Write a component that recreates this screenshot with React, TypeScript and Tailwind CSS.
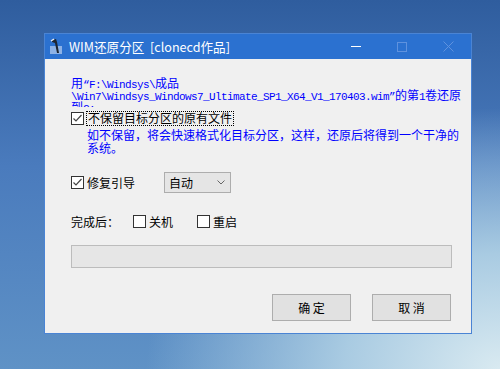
import React from 'react';

const cjk = "font-['Noto_Sans_CJK_SC',sans-serif]";

// SimSun-like run: ASCII half-width (6px), CJK full-width (12px)
function Mixed({ text }: { text: string }) {
  const runs = text.match(/[\x20-\x7e\u201c\u201d]+|[^\x20-\x7e\u201c\u201d]+/g) ?? [];
  return (
    <>
      {runs.map((r, i) =>
        /^[\x20-\x7e\u201c\u201d]/.test(r) ? (
          <span key={i} className="font-['Liberation_Mono',monospace] text-[11px] tracking-[-0.6px]">
            {r}
          </span>
        ) : (
          <span key={i} className={`${cjk} text-[12px]`}>
            {r}
          </span>
        )
      )}
    </>
  );
}

function Check({ checked }: { checked?: boolean }) {
  return (
    <div className="w-[13px] h-[13px] border border-[#333333] bg-white flex items-center justify-center shrink-0">
      {checked && (
        <svg width="11" height="11" viewBox="0 0 11 11">
          <polyline points="1.5,5.5 4,8 9.5,2" fill="none" stroke="#444" strokeWidth="1.2" />
        </svg>
      )}
    </div>
  );
}

function AppIcon() {
  return (
    <svg width="14" height="17" viewBox="0 0 14 17">
      <rect x="1" y="8" width="12" height="8" fill="#8db2e6" />
      <path d="M3 2 L7 1 L8 4 L10 15 L8 15 L6 5 L3 4 Z" fill="#1d2530" />
      <path d="M2 3 L5 1" stroke="#e8eef8" strokeWidth="1.5" />
    </svg>
  );
}

export default function App() {
  return (
    <div className="w-[500px] h-[369px] overflow-hidden pl-[44px] pt-[33px] bg-[radial-gradient(ellipse_at_100%_100%,#d9eaf1_0%,#a9cbe2_22%,transparent_50%),linear-gradient(180deg,#2f5d9e_0%,#4a7bbd_45%,#5f92c6_100%)]">
      <div className="w-[428px] h-[301px] border border-[#4a84d4] flex flex-col">
        {/* title bar */}
        <div className="h-[25px] bg-[#2b71d0] flex items-center text-white">
          <div className="ml-[4px] w-[14px] flex items-center">
            <AppIcon />
          </div>
          <div className={`ml-[6px] ${cjk} text-[12.6px] leading-[14px] whitespace-pre`}>WIM还原分区  [clonecd作品]</div>
          <div className="ml-auto flex items-center">
            <div className="w-[46px] flex justify-center">
              <div className="w-[10px] h-px bg-white" />
            </div>
            <div className="w-[46px] flex justify-center">
              <div className="w-[10px] h-[10px] border border-[#5f92de]" />
            </div>
            <div className="w-[46px] flex justify-center">
              <svg width="11" height="11" viewBox="0 0 11 11">
                <path d="M0.5 0.5 L10.5 10.5 M10.5 0.5 L0.5 10.5" stroke="#5f92de" strokeWidth="1" />
              </svg>
            </div>
          </div>
        </div>

        {/* body */}
        <div className="flex-1 bg-[#f0f0f0] pl-[26px] flex flex-col">
          <div className="mt-[17px] h-[31px] overflow-hidden text-[#0000ff]">
            <div className="h-[12px] leading-[12px] whitespace-nowrap"><Mixed text={'用“F:\\Windsys\\成品'} /></div>
            <div className="h-[12px] leading-[12px] whitespace-nowrap"><Mixed text={'\\Win7\\Windsys_Windows7_Ultimate_SP1_X64_V1_170403.wim”的第1卷还原'} /></div>
            <div className="h-[12px] leading-[12px] whitespace-nowrap"><Mixed text={'到C:'} /></div>
          </div>

          <div className="mt-[3px] h-[16px] flex items-center">
            <Check checked />
            <div className={`ml-[2px] border border-dotted border-black h-[15px] flex items-center px-px ${cjk} text-[12px] leading-[12px] text-black`}>
              不保留目标分区的原有文件
            </div>
          </div>

          <div className={`mt-[2px] ml-[16px] text-[#0000ff] ${cjk} text-[12px] leading-[13px]`}>
            <div className="whitespace-nowrap">如不保留，将会快速格式化目标分区，这样，还原后将得到一个干净的</div>
            <div className="whitespace-nowrap">系统。</div>
          </div>

          <div className="mt-[18px] h-[21px] flex items-center">
            <Check checked />
            <div className={`ml-[3px] ${cjk} text-[12px] leading-[12px] text-black`}>修复引导</div>
            <div className="ml-[29px] w-[67px] h-[21px] bg-[#e5e5e5] border border-[#adadad] flex items-center pl-[4px] pr-[5px]">
              <span className={`${cjk} text-[12px] leading-[12px] text-black`}>自动</span>
              <svg className="ml-auto" width="8" height="5" viewBox="0 0 8 5">
                <polyline points="0.5,0.5 4,4 7.5,0.5" fill="none" stroke="#666" strokeWidth="1" />
              </svg>
            </div>
          </div>

          <div className={`mt-[22px] h-[13px] flex items-center ${cjk} text-[12px] leading-[12px] text-black`}>
            <span className="w-[62px]">完成后：</span>
            <Check />
            <span className="ml-[3px] w-[48px]">关机</span>
            <Check />
            <span className="ml-[3px]">重启</span>
          </div>

          <div className="mt-[17px] w-[381px] h-[23px] bg-[#e6e6e6] border border-[#bcbcbc]" />

          <div className={`mt-[26px] ml-[201px] flex gap-[21px] ${cjk} text-[12px] text-black`}>
            <div className="w-[79px] h-[27px] bg-[#e1e1e1] border border-[#adadad] flex items-center justify-center whitespace-pre">确 定</div>
            <div className="w-[79px] h-[27px] bg-[#e1e1e1] border border-[#adadad] flex items-center justify-center whitespace-pre">取 消</div>
          </div>
        </div>
      </div>
    </div>
  );
}
